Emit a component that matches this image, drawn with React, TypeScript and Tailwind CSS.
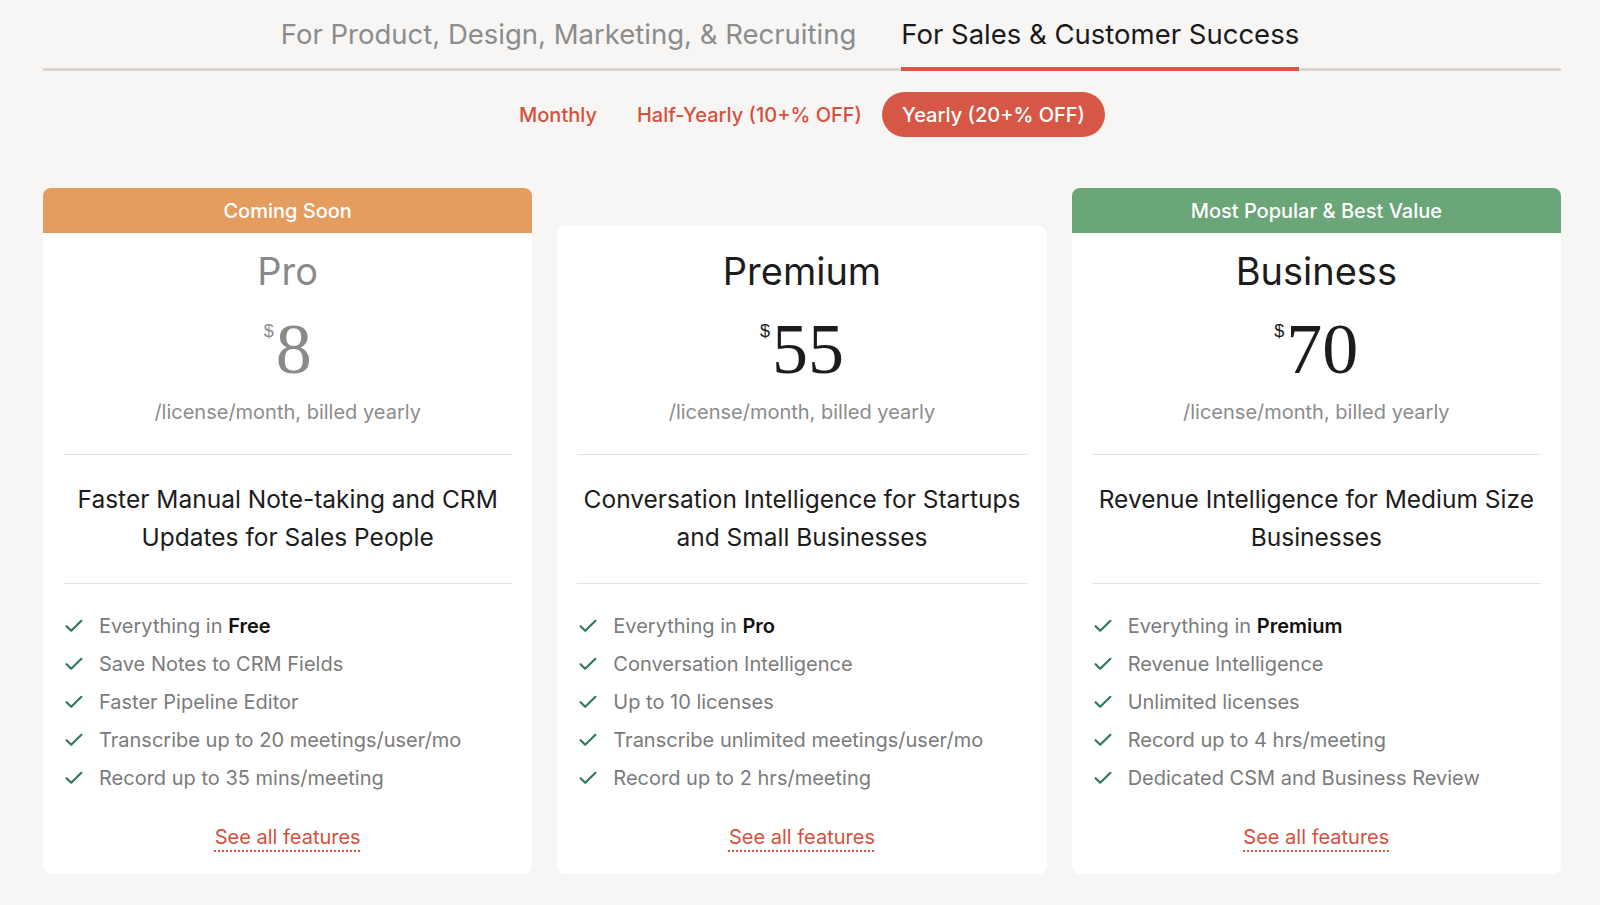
import { useState } from 'react'

type Plan = {
  name: string
  price: string
  banner?: { label: string; color: string }
  muted?: boolean
  description: string[]
  base: string
  features: string[]
}

const plans: Plan[] = [
  {
    name: 'Pro',
    price: '8',
    banner: { label: 'Coming Soon', color: 'bg-[#e59d5f]' },
    muted: true,
    description: ['Faster Manual Note-taking and CRM', 'Updates for Sales People'],
    base: 'Free',
    features: [
      'Save Notes to CRM Fields',
      'Faster Pipeline Editor',
      'Transcribe up to 20 meetings/user/mo',
      'Record up to 35 mins/meeting',
    ],
  },
  {
    name: 'Premium',
    price: '55',
    description: ['Conversation Intelligence for Startups', 'and Small Businesses'],
    base: 'Pro',
    features: [
      'Conversation Intelligence',
      'Up to 10 licenses',
      'Transcribe unlimited meetings/user/mo',
      'Record up to 2 hrs/meeting',
    ],
  },
  {
    name: 'Business',
    price: '70',
    banner: { label: 'Most Popular & Best Value', color: 'bg-[#6aa677]' },
    description: ['Revenue Intelligence for Medium Size', 'Businesses'],
    base: 'Premium',
    features: [
      'Revenue Intelligence',
      'Unlimited licenses',
      'Record up to 4 hrs/meeting',
      'Dedicated CSM and Business Review',
    ],
  },
]

const tabs = ['For Product, Design, Marketing, & Recruiting', 'For Sales & Customer Success']
const periods = ['Monthly', 'Half-Yearly (10+% OFF)', 'Yearly (20+% OFF)']

const CheckMark = () => (
  <svg width="18" height="14" viewBox="0 0 18 14" fill="none" className="shrink-0">
    <path d="M1.6 7.2 6.2 11.7 16.4 1.8" stroke="#2f7a5a" strokeWidth="2.2" strokeLinecap="round" strokeLinejoin="round" />
  </svg>
)

const PlanCard = ({ plan }: { plan: Plan }) => {
  const tone = plan.muted ? 'text-[#8a8a8a]' : 'text-[#1c1c1c]'
  return (
    <div className={`flex flex-col ${plan.banner ? '' : 'mt-[38px]'}`}>
      {plan.banner && (
        <div
          className={`flex h-[45px] items-center justify-center rounded-t-[8px] text-[20px] font-medium text-white ${plan.banner.color}`}
        >
          {plan.banner.label}
        </div>
      )}
      <div
        className={`flex flex-1 flex-col bg-white px-[20px] pb-[22px] ${
          plan.banner ? 'rounded-b-[8px] pt-[16px]' : 'rounded-[8px] pt-[23px]'
        }`}
      >
        <h3 className={`text-center text-[38px] leading-[44px] ${tone}`}>{plan.name}</h3>
        <div className={`mt-[20px] flex justify-center ${tone}`}>
          <span className="mt-[8px] mr-[2px] font-['Liberation_Sans',sans-serif] text-[18px] leading-[20px]">$</span>
          <span className="font-['Liberation_Serif',serif] text-[72px] leading-[72px]">{plan.price}</span>
        </div>
        <p className="mt-[13px] text-center text-[20px] leading-[28px] text-[#8c8c8c]">/license/month, billed yearly</p>
        <div className="mt-[28px] h-px bg-[#e4e0db]" />
        <p className="mt-[25px] text-center text-[24.5px] leading-[38px] text-[#1c1c1c]">
          {plan.description.map((line) => (
            <span key={line} className="block whitespace-nowrap">
              {line}
            </span>
          ))}
        </p>
        <div className="mt-[27px] h-px bg-[#e4e0db]" />
        <ul className="mt-[23px] pl-[2px]">
          <li className="flex h-[38px] items-center gap-[16px] text-[20px] text-[#7b7b7b]">
            <CheckMark />
            <span>
              Everything in <span className="font-semibold text-[#111]">{plan.base}</span>
            </span>
          </li>
          {plan.features.map((f) => (
            <li key={f} className="flex h-[38px] items-center gap-[16px] text-[20px] text-[#7b7b7b]">
              <CheckMark />
              <span className="whitespace-nowrap">{f}</span>
            </li>
          ))}
        </ul>
        <div className="mt-[26px] text-center leading-[28px]">
          <a className="text-[20px] text-[#d6503c] underline decoration-dotted decoration-[#d6503c] underline-offset-[6px]">
            See all features
          </a>
        </div>
      </div>
    </div>
  )
}

export default function App() {
  const [tab, setTab] = useState(1)
  const [period, setPeriod] = useState(2)

  return (
    <div className="min-h-screen bg-[#f7f6f4] font-['Inter',sans-serif]">
      <div className="ml-[43px] w-[1518px]">
        <div className="flex justify-center gap-[45px] border-b-[3px] border-[#dcd7d2] pt-[16px] pr-[24px]">
          {tabs.map((t, i) => (
            <button
              key={t}
              onClick={() => setTab(i)}
              className={`-mb-[3px] border-b-4 pb-[15px] text-[27.5px] leading-[36px] ${
                tab === i ? 'border-[#d65745] text-[#1a1a1a]' : 'border-transparent text-[#8c8c8c]'
              }`}
            >
              {t}
            </button>
          ))}
        </div>

        <div className="mt-[21px] flex justify-center">
          {periods.map((p, i) => (
            <button
              key={p}
              onClick={() => setPeriod(i)}
              className={`h-[45px] rounded-full px-[20px] text-[20px] font-medium ${
                period === i ? 'bg-[#d65745] text-white' : 'text-[#d6503c]'
              }`}
            >
              {p}
            </button>
          ))}
        </div>

        <div className="mt-[51px] grid grid-cols-3 gap-[25px]">
          {plans.map((plan) => (
            <PlanCard key={plan.name} plan={plan} />
          ))}
        </div>
      </div>
    </div>
  )
}
